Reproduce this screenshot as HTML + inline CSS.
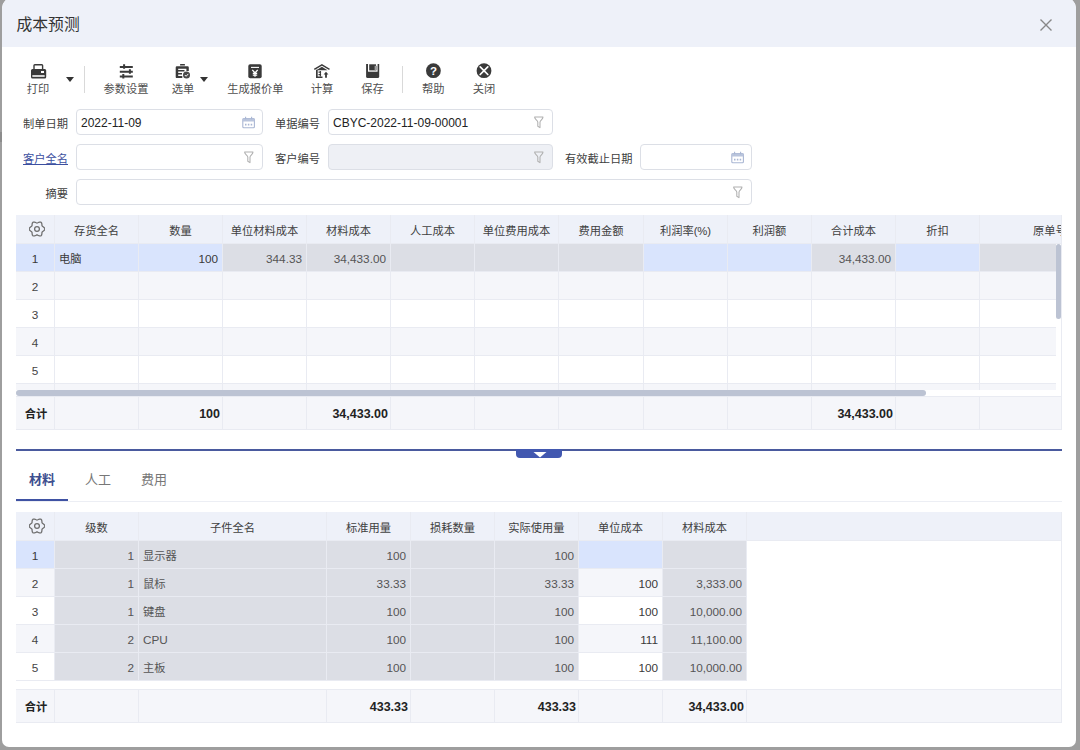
<!DOCTYPE html>
<html lang="zh-CN">
<head>
<meta charset="utf-8">
<title>成本预测</title>
<style>
*{box-sizing:border-box;margin:0;padding:0}
html,body{width:1080px;height:750px;overflow:hidden}
body{background:#9e9e9e;font-family:"Liberation Sans","Noto Sans CJK SC",sans-serif;font-size:12px;color:#333;position:relative}
.dlg{position:absolute;left:2px;top:-2px;width:1074px;height:749px;background:#fff;border-radius:10px 10px 7px 7px;overflow:hidden}
.hd{position:absolute;left:0;top:0;width:100%;height:49px;background:#eef1f9}
.pg{position:absolute;left:0;top:0;width:1080px;height:750px}
.t{position:absolute;left:16.500px;top:13px;font-size:15.800px;line-height:24px;color:#333}
.x{position:absolute;left:1038.500px;top:17.800px}
.abs{position:absolute}
/* toolbar */
.tl{position:absolute;top:81px;height:16px;line-height:16px;font-size:11.25px;color:#505050;text-align:center;white-space:nowrap}
.sep{position:absolute;top:66px;width:1px;height:27px;background:#d9d9d9}
.arr{position:absolute;width:0;height:0;border-left:4px solid transparent;border-right:4px solid transparent;border-top:5px solid #333}
/* form */
.lb{position:absolute;text-align:right;font-size:11.25px;line-height:16px;color:#404040;white-space:nowrap}
.ip{position:absolute;height:26px;border:1px solid #dcdfe6;border-radius:4px;background:#fff;font-size:12px;line-height:24px;padding:1px 0 0 4px;color:#222;white-space:nowrap}
.ip.dis{background:#eef0f5}
.ip svg{position:absolute;right:7.500px;top:5.500px}
.lb.lk{color:#3c4fa0;text-decoration:underline}
/* grid */
.grid{position:absolute;left:16px;width:1046px;overflow:hidden;border-right:1px solid #e9ebf2}
.row{position:absolute;left:0;height:28px;width:1200px;white-space:nowrap}
.c{position:absolute;top:0;height:100%;border-right:1px solid #e9ebf2;border-bottom:1px solid #e9ebf2;line-height:27px;padding:0.5px 4px 0 4px;overflow:hidden;white-space:nowrap;font-size:11.75px;color:#3a3a3a}
.hdr .c{background:#eef1f9;text-align:center;color:#404040;font-size:11.25px;padding-top:2.5px}
.r{text-align:right}
.ct{text-align:center}
.odd .c{background:#fff}
.even .c{background:#f5f6fa}
.c.g{background:#dcdee5 !important;color:#555}
.c.s{background:#d9e4fd !important}
.tot .c{background:#f5f6fa;font-weight:bold;color:#222;line-height:35.5px;border-top:1px solid #e9ebf2;padding-top:0;padding-right:2px;font-size:12.5px}
.tot .c:first-child{text-align:center;font-size:11.25px}
.c.z{font-size:11.25px;padding-top:2px}
.c.w{background:#fff !important;border-bottom:none;border-right:1px solid #e9ebf2}
.c.n{color:#444}
.hsbt{position:absolute;left:0;top:175px;width:1045px;height:6px;background:#fff}
.hsb{position:absolute;left:0;top:175px;width:910px;height:6px;border-radius:3px;background:#bcc3d3;z-index:2}
.vsb{position:absolute;left:1040px;top:29px;width:5px;height:75px;border-radius:3px;background:#bcc3d3;z-index:3}
.vtr{position:absolute;left:1040px;top:29px;width:5px;height:146px;background:#fff;z-index:2}
.tab{position:absolute;top:471px;font-size:13px;line-height:18px;color:#777;white-space:nowrap}
.tab.on{color:#3d4f8f;font-weight:bold}
</style>
</head>
<body>
<div class="abs" style="left:0;top:132px;width:2px;height:10px;background:#8c8c8c"></div>
<div class="dlg"><div class="hd"></div></div>
<div class="pg">
  <div class="t">成本预测</div>
  <svg class="x" width="14" height="14" viewBox="0 0 14 14"><path d="M1.5 1.5L12.5 12.5M12.5 1.5L1.5 12.5" stroke="#888" stroke-width="1.4" fill="none"/></svg>

  <!-- toolbar -->
  <svg class="abs" style="left:28px;top:60px" width="22" height="22" viewBox="28 60 22 22"><path d="M34 69.500V65.500a.8.800 0 0 1 .8-.8h7a.800.800 0 0 1 .8.800v4" fill="none" stroke="#3a3a3a" stroke-width="1.400"/><path fill="#3a3a3a" fill-rule="evenodd" d="M32.500 69h12.200a1.500 1.500 0 0 1 1.500 1.500v6.600a1.500 1.500 0 0 1-1.500 1.500H32.500a1.500 1.500 0 0 1-1.500-1.500v-6.600a1.500 1.500 0 0 1 1.500-1.500zM41 71v1.900h3V71zM32.400 75.100v1.800h12.200v-1.800z"/><rect x="32.400" y="75.100" width="12.200" height="1.800" fill="#3a3a3a" opacity=".25"/></svg>
  <div class="tl" style="left:-2.0px;width:80px">打印</div>
  <div class="arr" style="left:65.500px;top:77px"></div>
  <div class="sep" style="left:84px"></div>
  <svg class="abs" style="left:116px;top:60px" width="22" height="22" viewBox="116 60 22 22"><path d="M119.800 67h13M119.800 71.750h13M119.800 76.500h13" stroke="#3a3a3a" stroke-width="1.900" fill="none"/><path d="M124.100 64.200v4.600M129.900 69.200v4.600M123.300 74v4.600" stroke="#3a3a3a" stroke-width="2" fill="none"/></svg>
  <div class="tl" style="left:86.0px;width:80px">参数设置</div>
  <svg class="abs" style="left:172px;top:60px" width="22" height="22" viewBox="172 60 22 22"><rect x="180" y="64.100" width="5" height="1.500" rx=".6" fill="#3a3a3a"/><path fill="#3a3a3a" d="M175.700 67.400a1.200 1.200 0 0 1 1.200-1.200h10.700a1.200 1.200 0 0 1 1.200 1.200v3.500h-2.400v-2.200h-8.200v1.200h6.300v1.500h-6.300v1.500h3.800v1.500h-3.800v1.500h4.100v2.200h-5.400a1.200 1.200 0 0 1-1.200-1.200z"/><circle cx="186.500" cy="75" r="3.500" fill="#484848"/><path d="M184.800 75l1.300 1.300 2.200-2.400" stroke="#fff" stroke-width="1" fill="none"/></svg>
  <div class="tl" style="left:143.0px;width:80px">选单</div>
  <div class="arr" style="left:199.500px;top:77px"></div>
  <svg class="abs" style="left:244px;top:60px" width="22" height="22" viewBox="244 60 22 22"><rect x="248.300" y="64.200" width="13.400" height="14.100" rx="1.800" fill="#3a3a3a"/><path d="M251 67.400h8" stroke="#fff" stroke-width="1.100"/><path d="M252.300 69.800l2.700 3.200 2.700-3.200M255 73v3.800M252.800 73.400h4.400M252.800 75.200h4.400" stroke="#fff" stroke-width="1.300" fill="none"/></svg>
  <div class="tl" style="left:215.5px;width:80px">生成报价单</div>
  <svg class="abs" style="left:311px;top:60px" width="22" height="22" viewBox="311 60 22 22"><path d="M314.300 69.400l7.600-4.600 7.600 4.600" stroke="#3a3a3a" stroke-width="1.400" fill="none" stroke-linejoin="round"/><path d="M316.300 70.300l5.600-3.500 5.600 3.500z" fill="#3a3a3a"/><path fill="#3a3a3a" d="M316 69.800h1.700v6.700h4.800V78H316z"/><path d="M318.500 72.200h2.600M318.500 74.600h2.600" stroke="#3a3a3a" stroke-width="1.300"/><path d="M320.400 71v5.500" stroke="#3a3a3a" stroke-width="1.100"/><path fill="#3a3a3a" d="M326 71.800l2.400 2.700h-1.500v3.200h-1.800v-3.200h-1.500z"/></svg>
  <div class="tl" style="left:282.0px;width:80px">计算</div>
  <svg class="abs" style="left:361px;top:60px" width="22" height="22" viewBox="361 60 22 22"><path fill="#3a3a3a" d="M366.100 63.900h13.100v12.700a1.500 1.500 0 0 1-1.500 1.500h-10.100a1.500 1.500 0 0 1-1.500-1.500z"/><rect x="368" y="63.900" width="9.600" height="7.800" fill="#fff"/><rect x="369.200" y="64.300" width="6.800" height="6.100" fill="#3a3a3a"/><rect x="374.600" y="65.800" width="3" height="4.600" fill="#a0a0a0"/></svg>
  <div class="tl" style="left:332.5px;width:80px">保存</div>
  <div class="sep" style="left:402px"></div>
  <svg class="abs" style="left:422px;top:60px" width="22" height="22" viewBox="422 60 22 22"><circle cx="433.400" cy="70.650" r="7.400" fill="#3a3a3a"/><text x="433.400" y="75" font-size="11.500" font-weight="bold" text-anchor="middle" fill="#fff" font-family="Liberation Sans,sans-serif">?</text></svg>
  <div class="tl" style="left:393.3px;width:80px">帮助</div>
  <svg class="abs" style="left:473px;top:60px" width="22" height="22" viewBox="473 60 22 22"><circle cx="484" cy="70.650" r="7.400" fill="#3a3a3a"/><path d="M480.200 66.900l7.600 7.600M487.800 66.900l-7.600 7.600" stroke="#fff" stroke-width="1.700" stroke-linecap="round"/></svg>
  <div class="tl" style="left:444.0px;width:80px">关闭</div>
  <!-- form -->
  <div class="lb" style="left:-22px;width:90px;top:115.500px">制单日期</div>
  <div class="ip" style="left:76px;top:109px;width:187px">2022-11-09<svg width="14" height="13" viewBox="0 0 14 13"><rect x="1.800" y="2.500" width="11.600" height="9.200" rx="1" fill="none" stroke="#a9b6d3" stroke-width="1.100"/><rect x="1.800" y="2.500" width="11.600" height="3" fill="#b9c4dc"/><path d="M4.600 0.800v2.400M10.600 0.800v2.400" stroke="#a9b6d3" stroke-width="1.100"/><path d="M4 8.600h1.500M6.850 8.600h1.500M9.700 8.600h1.500" stroke="#a9b6d3" stroke-width="1.600"/></svg></div>
  <div class="lb" style="left:230px;width:90px;top:115.500px">单据编号</div>
  <div class="ip" style="left:328px;top:109px;width:225px">CBYC-2022-11-09-00001<svg width="12" height="13" viewBox="0 0 12 13"><path d="M1.600 1h8.400c.1 2-2.600 3.200-3 5v5.600l-2.200-1.300v-4.300c-.4-1.800-3.300-3-3.200-5z" fill="none" stroke="#b0b0b0" stroke-width="1.050" stroke-linejoin="round"/></svg></div>

  <div class="lb lk" style="left:-22px;width:90px;top:150.500px">客户全名</div>
  <div class="ip" style="left:76px;top:144px;width:187px"><svg width="12" height="13" viewBox="0 0 12 13"><path d="M1.600 1h8.400c.1 2-2.600 3.200-3 5v5.600l-2.200-1.300v-4.300c-.4-1.800-3.300-3-3.200-5z" fill="none" stroke="#b0b0b0" stroke-width="1.050" stroke-linejoin="round"/></svg></div>
  <div class="lb" style="left:230px;width:90px;top:150.500px">客户编号</div>
  <div class="ip dis" style="left:328px;top:144px;width:225px"><svg width="12" height="13" viewBox="0 0 12 13"><path d="M1.600 1h8.400c.1 2-2.600 3.200-3 5v5.600l-2.200-1.300v-4.300c-.4-1.800-3.300-3-3.200-5z" fill="none" stroke="#b0b0b0" stroke-width="1.050" stroke-linejoin="round"/></svg></div>
  <div class="lb" style="left:542.5px;width:90px;top:150.500px">有效截止日期</div>
  <div class="ip" style="left:640px;top:144px;width:112px"><svg width="14" height="13" viewBox="0 0 14 13"><rect x="1.800" y="2.500" width="11.600" height="9.200" rx="1" fill="none" stroke="#a9b6d3" stroke-width="1.100"/><rect x="1.800" y="2.500" width="11.600" height="3" fill="#b9c4dc"/><path d="M4.600 0.800v2.400M10.600 0.800v2.400" stroke="#a9b6d3" stroke-width="1.100"/><path d="M4 8.600h1.500M6.850 8.600h1.500M9.700 8.600h1.500" stroke="#a9b6d3" stroke-width="1.600"/></svg></div>

  <div class="lb" style="left:-22px;width:90px;top:185.500px">摘要</div>
  <div class="ip" style="left:76px;top:179px;width:676px"><svg width="12" height="13" viewBox="0 0 12 13"><path d="M1.600 1h8.400c.1 2-2.600 3.200-3 5v5.600l-2.200-1.300v-4.300c-.4-1.800-3.300-3-3.200-5z" fill="none" stroke="#b0b0b0" stroke-width="1.050" stroke-linejoin="round"/></svg></div>

  <!-- grid 1 -->
  <div class="grid" style="top:215px;height:215px">
    <div class="row hdr" style="top:0;height:29px"><div class="c " style="left:0px;width:39px"><svg width="16" height="16" viewBox="0 0 16 16" style="position:absolute;left:13px;top:6px"><path d="M15.9 8.0L15.5 9.0L14.7 9.8L13.8 10.4L13.2 11.0L12.9 11.8L12.9 12.9L12.6 14.0L11.9 14.8L10.9 15.0L9.8 14.7L8.8 14.2L8.0 13.9L7.2 14.2L6.2 14.7L5.1 15.0L4.1 14.8L3.4 14.0L3.1 12.9L3.1 11.8L2.8 11.0L2.2 10.4L1.3 9.8L0.5 9.0L0.1 8.0L0.5 7.0L1.3 6.2L2.2 5.6L2.8 5.0L3.1 4.2L3.1 3.1L3.4 2.0L4.1 1.2L5.1 1.0L6.2 1.3L7.2 1.8L8.0 2.0L8.8 1.8L9.8 1.3L10.9 1.0L11.9 1.2L12.6 2.0L12.9 3.1L12.9 4.2L13.2 5.0L13.8 5.6L14.7 6.2L15.5 7.0z" fill="none" stroke="#6e6e6e" stroke-width="1.250" stroke-linejoin="round"/><circle cx="8" cy="8" r="2.400" fill="none" stroke="#6e6e6e" stroke-width="1.250"/></svg></div><div class="c " style="left:39px;width:84px">存货全名</div><div class="c " style="left:123px;width:84px">数量</div><div class="c " style="left:207px;width:84px">单位材料成本</div><div class="c " style="left:291px;width:84px">材料成本</div><div class="c " style="left:375px;width:84px">人工成本</div><div class="c " style="left:459px;width:84px">单位费用成本</div><div class="c " style="left:543px;width:85px">费用金额</div><div class="c " style="left:628px;width:84px">利润率(%)</div><div class="c " style="left:712px;width:84px">利润额</div><div class="c " style="left:796px;width:84px">合计成本</div><div class="c " style="left:880px;width:84px">折扣</div><div class="c " style="left:964px;width:141px">原单号</div></div>
    <div class="row odd" style="top:29px"><div class="c ct s" style="left:0px;width:39px">1</div><div class="c s z" style="left:39px;width:84px">电脑</div><div class="c r s" style="left:123px;width:84px">100</div><div class="c r g" style="left:207px;width:84px">344.33</div><div class="c r g" style="left:291px;width:84px">34,433.00</div><div class="c g" style="left:375px;width:84px"></div><div class="c g" style="left:459px;width:84px"></div><div class="c g" style="left:543px;width:85px"></div><div class="c s" style="left:628px;width:84px"></div><div class="c s" style="left:712px;width:84px"></div><div class="c r g" style="left:796px;width:84px">34,433.00</div><div class="c s" style="left:880px;width:84px"></div><div class="c g" style="left:964px;width:141px"></div></div>
    <div class="row even" style="top:57px"><div class="c ct n" style="left:0px;width:39px">2</div><div class="c " style="left:39px;width:84px"></div><div class="c " style="left:123px;width:84px"></div><div class="c " style="left:207px;width:84px"></div><div class="c " style="left:291px;width:84px"></div><div class="c " style="left:375px;width:84px"></div><div class="c " style="left:459px;width:84px"></div><div class="c " style="left:543px;width:85px"></div><div class="c " style="left:628px;width:84px"></div><div class="c " style="left:712px;width:84px"></div><div class="c " style="left:796px;width:84px"></div><div class="c " style="left:880px;width:84px"></div><div class="c " style="left:964px;width:141px"></div></div>
    <div class="row odd" style="top:85px"><div class="c ct n" style="left:0px;width:39px">3</div><div class="c " style="left:39px;width:84px"></div><div class="c " style="left:123px;width:84px"></div><div class="c " style="left:207px;width:84px"></div><div class="c " style="left:291px;width:84px"></div><div class="c " style="left:375px;width:84px"></div><div class="c " style="left:459px;width:84px"></div><div class="c " style="left:543px;width:85px"></div><div class="c " style="left:628px;width:84px"></div><div class="c " style="left:712px;width:84px"></div><div class="c " style="left:796px;width:84px"></div><div class="c " style="left:880px;width:84px"></div><div class="c " style="left:964px;width:141px"></div></div>
    <div class="row even" style="top:113px"><div class="c ct n" style="left:0px;width:39px">4</div><div class="c " style="left:39px;width:84px"></div><div class="c " style="left:123px;width:84px"></div><div class="c " style="left:207px;width:84px"></div><div class="c " style="left:291px;width:84px"></div><div class="c " style="left:375px;width:84px"></div><div class="c " style="left:459px;width:84px"></div><div class="c " style="left:543px;width:85px"></div><div class="c " style="left:628px;width:84px"></div><div class="c " style="left:712px;width:84px"></div><div class="c " style="left:796px;width:84px"></div><div class="c " style="left:880px;width:84px"></div><div class="c " style="left:964px;width:141px"></div></div>
    <div class="row odd" style="top:141px"><div class="c ct n" style="left:0px;width:39px">5</div><div class="c " style="left:39px;width:84px"></div><div class="c " style="left:123px;width:84px"></div><div class="c " style="left:207px;width:84px"></div><div class="c " style="left:291px;width:84px"></div><div class="c " style="left:375px;width:84px"></div><div class="c " style="left:459px;width:84px"></div><div class="c " style="left:543px;width:85px"></div><div class="c " style="left:628px;width:84px"></div><div class="c " style="left:712px;width:84px"></div><div class="c " style="left:796px;width:84px"></div><div class="c " style="left:880px;width:84px"></div><div class="c " style="left:964px;width:141px"></div></div>
    <div class="row even" style="top:169px"><div class="c ct n" style="left:0px;width:39px">6</div><div class="c " style="left:39px;width:84px"></div><div class="c " style="left:123px;width:84px"></div><div class="c " style="left:207px;width:84px"></div><div class="c " style="left:291px;width:84px"></div><div class="c " style="left:375px;width:84px"></div><div class="c " style="left:459px;width:84px"></div><div class="c " style="left:543px;width:85px"></div><div class="c " style="left:628px;width:84px"></div><div class="c " style="left:712px;width:84px"></div><div class="c " style="left:796px;width:84px"></div><div class="c " style="left:880px;width:84px"></div><div class="c " style="left:964px;width:141px"></div></div>
    <div class="hsb"></div><div class="hsbt"></div>
    <div class="vtr"></div><div class="vsb"></div>
    <div class="row tot" style="top:181px;height:34px"><div class="c " style="left:0px;width:39px">合计</div><div class="c " style="left:39px;width:84px"></div><div class="c r" style="left:123px;width:84px">100</div><div class="c " style="left:207px;width:84px"></div><div class="c r" style="left:291px;width:84px">34,433.00</div><div class="c " style="left:375px;width:84px"></div><div class="c " style="left:459px;width:84px"></div><div class="c " style="left:543px;width:85px"></div><div class="c " style="left:628px;width:84px"></div><div class="c " style="left:712px;width:84px"></div><div class="c r" style="left:796px;width:84px">34,433.00</div><div class="c " style="left:880px;width:84px"></div><div class="c " style="left:964px;width:141px"></div></div>
  </div>
  <!-- splitter + tabs -->
  <div class="abs" style="left:16px;top:449px;width:1046px;height:2px;background:#4a5a9e"></div>
  <svg class="abs" style="left:516px;top:449px" width="46" height="9" viewBox="0 0 46 9"><path d="M0 0h46v5a4 4 0 0 1-4 4H4a4 4 0 0 1-4-4z" fill="#4258b0"/><path d="M17.500 3h13l-6.500 5.500z" fill="#fff"/></svg>
  <div class="tab on" style="left:29px">材料</div>
  <div class="tab" style="left:85px">人工</div>
  <div class="tab" style="left:141px">费用</div>
  <div class="abs" style="left:16px;top:501px;width:1046px;height:1px;background:#eceef4"></div>
  <div class="abs" style="left:16px;top:499px;width:52px;height:2px;background:#3f52a3"></div>
  <!-- grid 2 -->
  <div class="grid" style="top:512px;height:211px">
    <div class="row hdr" style="top:0;height:29px"><div class="c " style="left:0px;width:39px"><svg width="16" height="16" viewBox="0 0 16 16" style="position:absolute;left:13px;top:6px"><path d="M15.9 8.0L15.5 9.0L14.7 9.8L13.8 10.4L13.2 11.0L12.9 11.8L12.9 12.9L12.6 14.0L11.9 14.8L10.9 15.0L9.8 14.7L8.8 14.2L8.0 13.9L7.2 14.2L6.2 14.7L5.1 15.0L4.1 14.8L3.4 14.0L3.1 12.9L3.1 11.8L2.8 11.0L2.2 10.4L1.3 9.8L0.5 9.0L0.1 8.0L0.5 7.0L1.3 6.2L2.2 5.6L2.8 5.0L3.1 4.2L3.1 3.1L3.4 2.0L4.1 1.2L5.1 1.0L6.2 1.3L7.2 1.8L8.0 2.0L8.8 1.8L9.8 1.3L10.9 1.0L11.9 1.2L12.6 2.0L12.9 3.1L12.9 4.2L13.2 5.0L13.8 5.6L14.7 6.2L15.5 7.0z" fill="none" stroke="#6e6e6e" stroke-width="1.250" stroke-linejoin="round"/><circle cx="8" cy="8" r="2.400" fill="none" stroke="#6e6e6e" stroke-width="1.250"/></svg></div><div class="c " style="left:39px;width:84px">级数</div><div class="c " style="left:123px;width:188px">子件全名</div><div class="c " style="left:311px;width:84px">标准用量</div><div class="c " style="left:395px;width:84px">损耗数量</div><div class="c " style="left:479px;width:84px">实际使用量</div><div class="c " style="left:563px;width:84px">单位成本</div><div class="c " style="left:647px;width:84px">材料成本</div><div class="c " style="left:731px;width:315px"></div></div>
    <div class="row odd" style="top:29px"><div class="c ct s" style="left:0px;width:39px">1</div><div class="c r g" style="left:39px;width:84px">1</div><div class="c g z" style="left:123px;width:188px">显示器</div><div class="c r g" style="left:311px;width:84px">100</div><div class="c g" style="left:395px;width:84px"></div><div class="c r g" style="left:479px;width:84px">100</div><div class="c r s" style="left:563px;width:84px"></div><div class="c r g" style="left:647px;width:84px"></div><div class="c w" style="left:731px;width:315px"></div></div>
    <div class="row even" style="top:57px"><div class="c ct n" style="left:0px;width:39px">2</div><div class="c r g" style="left:39px;width:84px">1</div><div class="c g z" style="left:123px;width:188px">鼠标</div><div class="c r g" style="left:311px;width:84px">33.33</div><div class="c g" style="left:395px;width:84px"></div><div class="c r g" style="left:479px;width:84px">33.33</div><div class="c r" style="left:563px;width:84px">100</div><div class="c r g" style="left:647px;width:84px">3,333.00</div><div class="c w" style="left:731px;width:315px"></div></div>
    <div class="row odd" style="top:85px"><div class="c ct n" style="left:0px;width:39px">3</div><div class="c r g" style="left:39px;width:84px">1</div><div class="c g z" style="left:123px;width:188px">键盘</div><div class="c r g" style="left:311px;width:84px">100</div><div class="c g" style="left:395px;width:84px"></div><div class="c r g" style="left:479px;width:84px">100</div><div class="c r" style="left:563px;width:84px">100</div><div class="c r g" style="left:647px;width:84px">10,000.00</div><div class="c w" style="left:731px;width:315px"></div></div>
    <div class="row even" style="top:113px"><div class="c ct n" style="left:0px;width:39px">4</div><div class="c r g" style="left:39px;width:84px">2</div><div class="c g" style="left:123px;width:188px">CPU</div><div class="c r g" style="left:311px;width:84px">100</div><div class="c g" style="left:395px;width:84px"></div><div class="c r g" style="left:479px;width:84px">100</div><div class="c r" style="left:563px;width:84px">111</div><div class="c r g" style="left:647px;width:84px">11,100.00</div><div class="c w" style="left:731px;width:315px"></div></div>
    <div class="row odd" style="top:141px"><div class="c ct n" style="left:0px;width:39px">5</div><div class="c r g" style="left:39px;width:84px">2</div><div class="c g z" style="left:123px;width:188px">主板</div><div class="c r g" style="left:311px;width:84px">100</div><div class="c g" style="left:395px;width:84px"></div><div class="c r g" style="left:479px;width:84px">100</div><div class="c r" style="left:563px;width:84px">100</div><div class="c r g" style="left:647px;width:84px">10,000.00</div><div class="c w" style="left:731px;width:315px"></div></div>
    <div class="row tot" style="top:177px;height:34px"><div class="c " style="left:0px;width:39px">合计</div><div class="c " style="left:39px;width:84px"></div><div class="c " style="left:123px;width:188px"></div><div class="c r" style="left:311px;width:84px">433.33</div><div class="c " style="left:395px;width:84px"></div><div class="c r" style="left:479px;width:84px">433.33</div><div class="c " style="left:563px;width:84px"></div><div class="c r" style="left:647px;width:84px">34,433.00</div><div class="c " style="left:731px;width:315px"></div></div>
  </div>
</div>
</body>
</html>
